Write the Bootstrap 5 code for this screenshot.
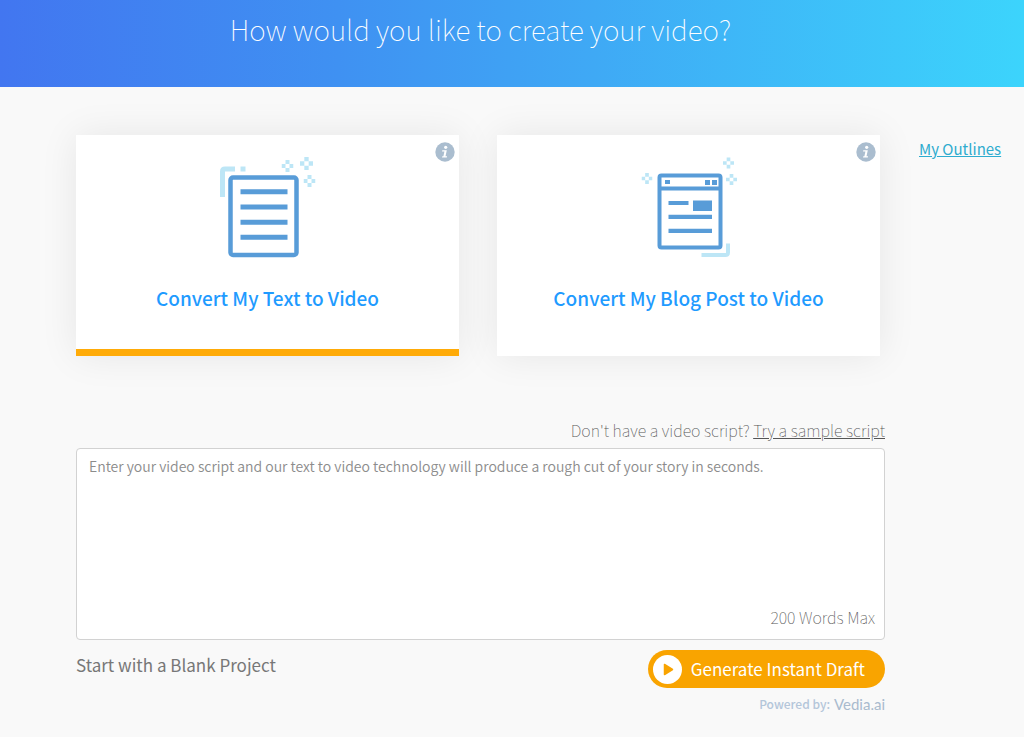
<!DOCTYPE html>
<html lang="en">
<head>
<meta charset="utf-8">
<meta name="viewport" content="width=device-width, initial-scale=1">
<title>Create your video</title>
<link href="https://cdn.jsdelivr.net/npm/bootstrap@5.3.0/dist/css/bootstrap.min.css" rel="stylesheet">
<style>
  body { font-family: "Source Sans Pro", "Noto Sans CJK SC", "Noto Sans", sans-serif; background: #f9f9f9; color: #777; }
  .page-gutter { padding-left: 76px; padding-right: 20px; }
  .side-col { width: 85px; margin-left: 34px; flex: none; }
  .hero { background: linear-gradient(90deg, #4276f0, #3f91f2 33%, #3fa9f5 58%, #3cd4fc); height: 87px; }
  .hero h1 { font-size: 28px; line-height: 36px; font-weight: 100; color: #fff; padding-top: 11px; }
  .choices { gap: 38px; margin-top: 48px; padding-right: 5px; }
  .choice { height: 221px; flex: 1 1 0; border: 0; border-bottom: 7px solid #fff; border-radius: 0; box-shadow: 0 0 36px rgba(0,0,0,.08); }
  .choice.active { border-bottom-color: #ffab08; }
  .choice svg.art { width: 140px; height: 120px; margin-top: 10px; }
  .choice-title { font-size: 19px; line-height: 24px; font-weight: 500; color: #1f9bff; margin-top: 21px; }
  .info-btn { position: absolute; top: 7px; right: 4px; z-index: 2; line-height: 0; }
  .outlines { font-size: 15px; line-height: 20px; color: #2eaccf; margin-top: 52px; }
  .sample { font-size: 16px; line-height: 20px; font-weight: 100; color: #555; margin-top: 64px; }
  .sample a { color: inherit; }
  .script-box { margin-top: 8px; }
  .script-box textarea { height: 192px; padding: 6px 12px; font-size: 14px; line-height: 22px; border: 1px solid #d2d2d2; border-radius: 4px; resize: none; }
  .script-box textarea::placeholder { color: #8c8c8c; font-weight: 350; opacity: 1; }
  .word-max { position: absolute; right: 10px; bottom: 13px; font-size: 16px; line-height: 20px; font-weight: 100; color: #555; }
  .blank-link { font-size: 17px; line-height: 24px; color: #777; margin-top: 13px; }
  .draft-btn { margin-top: 10px; height: 38px; padding: 0 20px 0 5px; gap: 9px; border: 0; background: #f9a400; color: #fff; font-size: 17px; line-height: 24px; }
  .draft-btn:hover { background: #ea9a00; color: #fff; }
  .powered { font-size: 12px; line-height: 16px; font-weight: 500; color: #b4c6da; margin-top: 8px; gap: 4px; }
  .vedia { font-family: Lato, sans-serif; font-weight: 400; font-size: 15px; color: #a9bbce; }
</style>
</head>
<body>
<svg class="d-none" aria-hidden="true">
  <symbol id="spark" viewBox="0 0 12 12"><path fill="#bde6f6" d="M4 0h4v4H4zM0 4h4v4H0zM8 4h4v4H8zM4 8h4v4H4z"/></symbol>
  <symbol id="info" viewBox="0 0 20 20"><circle cx="10" cy="10" r="9.7" fill="#aabdcf"/><circle cx="10.7" cy="5.3" r="1.6" fill="#fff"/><path fill="#fff" d="M7.3 8.2h4.500l-1.300 6.100h1.600l-.3 1.300H7l.3-1.300h1.100l1-4.800H7z"/></symbol>
</svg>

<header class="hero page-gutter d-flex">
  <h1 class="flex-grow-1 text-center mb-0">How would you like to create your video?</h1>
  <div class="side-col"></div>
</header>

<div class="page-gutter d-flex">
  <main class="flex-grow-1">
    <div class="choices d-flex">
      <div class="choice card active align-items-center">
        <button type="button" class="info-btn btn p-0 border-0" aria-label="About text to video"><svg width="20" height="20"><use href="#info"/></svg></button>
        <svg class="art" viewBox="-2 0 140 120" aria-hidden="true">
          <path d="M22.500 52V26.500Q22.500 24 25 24H35" fill="none" stroke="#bde6f6" stroke-width="5"/>
          <path d="M40.500 21.500h5v5h-5z" fill="#bde6f6"/>
          <use href="#spark" x="81.500" y="15" width="12" height="12"/>
          <use href="#spark" x="100" y="12" width="13" height="13"/>
          <use href="#spark" x="103.500" y="30" width="12" height="12"/>
          <rect x="30.500" y="32.500" width="66" height="77.500" rx="2.500" fill="#fff" stroke="#589cd8" stroke-width="4.500"/>
          <path d="M40.500 46.700h47M40.500 62h47M40.500 77.200h47M40.500 92.300h47" stroke="#589cd8" stroke-width="5"/>
        </svg>
        <button type="button" class="choice-title btn p-0 border-0 stretched-link">Convert My Text to Video</button>
      </div>
      <div class="choice card align-items-center">
        <button type="button" class="info-btn btn p-0 border-0" aria-label="About blog post to video"><svg width="20" height="20"><use href="#info"/></svg></button>
        <svg class="art" viewBox="-1 0 140 120" aria-hidden="true">
          <use href="#spark" x="21.500" y="28" width="11" height="11"/>
          <use href="#spark" x="103" y="12" width="11" height="12"/>
          <use href="#spark" x="106" y="29" width="11" height="11"/>
          <path d="M81.500 110H105.500Q108 110 108 107.500V98.500" fill="none" stroke="#bde6f6" stroke-width="4"/>
          <rect x="39.500" y="30.500" width="61" height="72" rx="2" fill="#fff" stroke="#589cd8" stroke-width="4"/>
          <path d="M39 43.500h62" stroke="#589cd8" stroke-width="4"/>
          <path fill="#589cd8" d="M45 35h5v4h-5zM85 35h5v5h-5zM92 35h5v5h-5zM73 55.500h19v10.500H73zM48.500 56h20v4h-20zM48.500 69.700h43.500v4.200H48.500zM48.500 83.700h43.500v4.200H48.500z"/>
        </svg>
        <button type="button" class="choice-title btn p-0 border-0 stretched-link">Convert My Blog Post to Video</button>
      </div>
    </div>

    <p class="sample text-end mb-0">Don't have a video script? <a href="#">Try a sample script</a></p>
    <div class="script-box position-relative">
      <textarea id="script" class="form-control" aria-label="Video script" aria-describedby="word-max" placeholder="Enter your video script and our text to video technology will produce a rough cut of your story in seconds."></textarea>
      <label for="script" id="word-max" class="word-max">200 Words Max</label>
    </div>
    <div class="d-flex justify-content-between align-items-start">
      <a href="#" class="blank-link text-decoration-none">Start with a Blank Project</a>
      <div class="d-flex flex-column align-items-end">
        <button type="button" class="draft-btn btn rounded-pill d-flex align-items-center">
          <svg width="29" height="29" viewBox="0 0 29 29" aria-hidden="true"><circle cx="14.500" cy="14.500" r="14.500" fill="#fff"/><path d="M11.500 9.500v10l8-5z" fill="#f9a400" stroke="#f9a400" stroke-width="1.500" stroke-linejoin="round"/></svg>
          Generate Instant Draft
        </button>
        <div class="powered d-flex"><span>Powered by:</span><span class="vedia">Vedia.ai</span></div>
      </div>
    </div>
  </main>
  <aside class="side-col"><a href="#" class="outlines d-block text-nowrap">My Outlines</a></aside>
</div>
<script src="https://cdn.jsdelivr.net/npm/bootstrap@5.3.0/dist/js/bootstrap.bundle.min.js"></script>
</body>
</html>
